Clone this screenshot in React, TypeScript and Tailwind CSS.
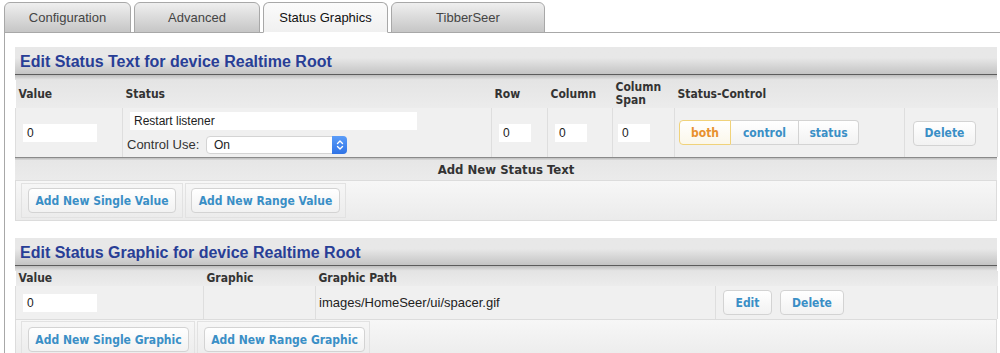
const tabs = [
  { label: "Configuration", w: "w-[127px]", active: false },
  { label: "Advanced", w: "w-[126px]", active: false },
  { label: "Status Graphics", w: "w-[125px]", active: true },
  { label: "TibberSeer", w: "w-[154px]", active: false },
];

const tahoma = "font-['DejaVu_Sans',sans-serif] font-stretch-condensed";

const Btn = ({ label, className = "" }: { label: string; className?: string }) => (
  <button
    type="button"
    className={`${tahoma} h-[25px] rounded-[4px] border border-[#d3d3d3] bg-gradient-to-b from-white to-[#f2f2f2] text-[12px] font-bold text-[#3a8fc6] ${className}`}
  >
    {label}
  </button>
);

const TextBox = ({ value, className = "" }: { value: string; className?: string }) => (
  <div className={`h-[20px] bg-white border border-[#f0f0f0] flex items-center pl-[4px] text-[12px] text-[#222] font-['Liberation_Sans',sans-serif] ${className}`}>
    {value}
  </div>
);

const Title = ({ text }: { text: string }) => (
  <div>
    <div className="h-[27px] bg-gradient-to-b from-[#e8e8e8] from-40% to-[#c4c4c4] flex items-end pl-[5px] pb-[4px]">
      <h2 className="font-['Liberation_Sans',sans-serif] font-bold text-[16px] leading-none text-[#283e96]">{text}</h2>
    </div>
    <div className="h-px bg-[#5c5c5c]" />
    <div className="h-[5px] bg-gradient-to-b from-[#bdbdbd] to-[#e6e6e6]" />
  </div>
);

const Th = ({ children, className = "" }: { children?: React.ReactNode; className?: string }) => (
  <th className={`${tahoma} text-left font-bold text-[12px] leading-[13px] text-[#333] pl-[3px] align-middle ${className}`}>{children}</th>
);

const Td = ({ children, className = "" }: { children?: React.ReactNode; className?: string }) => (
  <td className={`border-x border-[#dedede] bg-[#f0f0f0] align-middle ${className}`}>{children}</td>
);

export default function App() {
  return (
    <div className="w-[1000px] h-[353px] overflow-hidden bg-white">
      <div className="flex items-end pl-[4px] pt-[2px] gap-[3px] h-[33px] relative z-10">
        {tabs.map((t) => (
          <div
            key={t.label}
            className={`${t.w} h-[31px] rounded-t-[6px] border border-[#a8a8a8] flex items-center justify-center font-['Liberation_Sans',sans-serif] text-[13px] ${
              t.active
                ? "bg-gradient-to-b from-[#fbfbfb] to-[#f0f0f0] border-b-white text-[#111]"
                : "bg-gradient-to-b from-[#efefef] to-[#c6c6c6] text-[#444]"
            }`}
          >
            {t.label}
          </div>
        ))}
      </div>

      <div className="-mt-px border-l border-t border-[#a8a8a8] ml-[4px] pl-[10px] pr-[3px] pt-[14px]">
        <section>
          <Title text="Edit Status Text for device Realtime Root" />
          <table className="w-[982px] table-fixed border-collapse">
            <colgroup>
              <col className="w-[107px]" />
              <col className="w-[369px]" />
              <col className="w-[56px]" />
              <col className="w-[65px]" />
              <col className="w-[62px]" />
              <col className="w-[230px]" />
              <col className="w-[93px]" />
            </colgroup>
            <thead>
              <tr className="h-[28px] bg-gradient-to-b from-[#e4e4e4] to-[#ececec]">
                <Th>Value</Th>
                <Th>Status</Th>
                <Th>Row</Th>
                <Th>Column</Th>
                <Th>
                  Column
                  <br />
                  Span
                </Th>
                <Th>Status-Control</Th>
                <Th />
              </tr>
            </thead>
            <tbody>
              <tr className="h-[49px]">
                <Td className="pl-[6px]">
                  <TextBox value="0" className="w-[76px]" />
                </Td>
                <Td className="pl-[6px]">
                  <TextBox value="Restart listener" className="w-[289px]" />
                  <div className="flex items-center mt-[4px] -ml-[2px] font-['Liberation_Sans',sans-serif] text-[13px] text-[#333]">
                    <span className="w-[79px]">Control Use:</span>
                    <div className="w-[141px] h-[18px] rounded-[4px] border border-[#d4d4d4] bg-white flex items-center pl-[7px] text-[12px] text-[#222] relative">
                      On
                      <div className="absolute right-[-1px] top-[-1px] w-[15px] h-[18px] rounded-r-[4px] bg-gradient-to-b from-[#5a9cf8] to-[#2f73e6] flex items-center justify-center">
                        <svg width="8" height="12" viewBox="0 0 8 12" fill="none" stroke="white" strokeWidth="1.4" strokeLinecap="round" strokeLinejoin="round">
                          <path d="M1.5 4.5 4 2l2.5 2.5" />
                          <path d="M1.5 7.5 4 10l2.5-2.5" />
                        </svg>
                      </div>
                    </div>
                  </div>
                </Td>
                <Td className="pl-[6px]">
                  <TextBox value="0" className="w-[34px]" />
                </Td>
                <Td className="pl-[6px]">
                  <TextBox value="0" className="w-[34px]" />
                </Td>
                <Td className="pl-[4px]">
                  <TextBox value="0" className="w-[34px]" />
                </Td>
                <Td className="pl-[4px]">
                  <div className={`${tahoma} flex h-[25px] w-[180px] text-[12px] font-bold`}>
                    <div className="w-[52px] flex items-center justify-center rounded-l-[4px] border border-[#f0d27a] bg-gradient-to-b from-white to-[#fbf7ea] text-[#e8912f]">both</div>
                    <div className="w-[68px] flex items-center justify-center border-y border-r border-[#d3d3d3] bg-gradient-to-b from-white to-[#f2f2f2] text-[#3a8fc6]">control</div>
                    <div className="w-[60px] flex items-center justify-center rounded-r-[4px] border-y border-r border-[#d3d3d3] bg-gradient-to-b from-white to-[#f2f2f2] text-[#3a8fc6]">status</div>
                  </div>
                </Td>
                <Td className="pl-[8px]">
                  <Btn label="Delete" className="w-[63px]" />
                </Td>
              </tr>
            </tbody>
          </table>
          <div className="h-px bg-[#8a8a8a]" />
          <div className="h-[2px] bg-gradient-to-b from-[#bdbdbd] to-[#dadada]" />
          <div className={`${tahoma} h-[20px] bg-gradient-to-b from-[#e6e6e6] to-[#ebebeb] flex items-center justify-center font-bold text-[13px] text-[#333]`}>
            Add New Status Text
          </div>
          <div className="h-[41px] border border-[#dcdcdc] bg-gradient-to-b from-[#f7f7f7] to-[#ebebeb] flex items-center pl-[5px] gap-[2px]">
            <div className="h-[35px] w-[162px] border border-[#e2e2e2] flex items-center pl-[6px]">
              <Btn label="Add New Single Value" className="w-[148px]" />
            </div>
            <div className="h-[35px] w-[161px] border border-[#e2e2e2] flex items-center pl-[5px]">
              <Btn label="Add New Range Value" className="w-[149px]" />
            </div>
          </div>
        </section>

        <section className="mt-[17px]">
          <Title text="Edit Status Graphic for device Realtime Root" />
          <table className="w-[982px] table-fixed border-collapse">
            <colgroup>
              <col className="w-[188px]" />
              <col className="w-[112px]" />
              <col className="w-[400px]" />
              <col className="w-[282px]" />
            </colgroup>
            <thead>
              <tr className="h-[15px] bg-gradient-to-b from-[#e4e4e4] to-[#ececec]">
                <Th>Value</Th>
                <Th>Graphic</Th>
                <Th>Graphic Path</Th>
                <Th />
              </tr>
            </thead>
            <tbody>
              <tr className="h-[33px]">
                <Td className="pl-[6px]">
                  <TextBox value="0" className="w-[76px]" />
                </Td>
                <Td />
                <Td className="pl-[3px] font-['Liberation_Sans',sans-serif] text-[13px] text-[#222]">images/HomeSeer/ui/spacer.gif</Td>
                <Td className="pl-[7px]">
                  <div className="flex gap-[8px]">
                    <Btn label="Edit" className="w-[49px]" />
                    <Btn label="Delete" className="w-[64px]" />
                  </div>
                </Td>
              </tr>
            </tbody>
          </table>
          <div className="h-[41px] border border-[#dcdcdc] bg-gradient-to-b from-[#f7f7f7] to-[#ebebeb] flex items-start pt-[1px] pl-[5px] gap-[2px]">
            <div className="h-[40px] w-[174px] border border-[#e2e2e2] flex items-start pt-[5px] pl-[6px]">
              <Btn label="Add New Single Graphic" className="w-[161px]" />
            </div>
            <div className="h-[40px] w-[173px] border border-[#e2e2e2] flex items-start pt-[5px] pl-[6px]">
              <Btn label="Add New Range Graphic" className="w-[161px]" />
            </div>
          </div>
        </section>
      </div>
    </div>
  );
}
